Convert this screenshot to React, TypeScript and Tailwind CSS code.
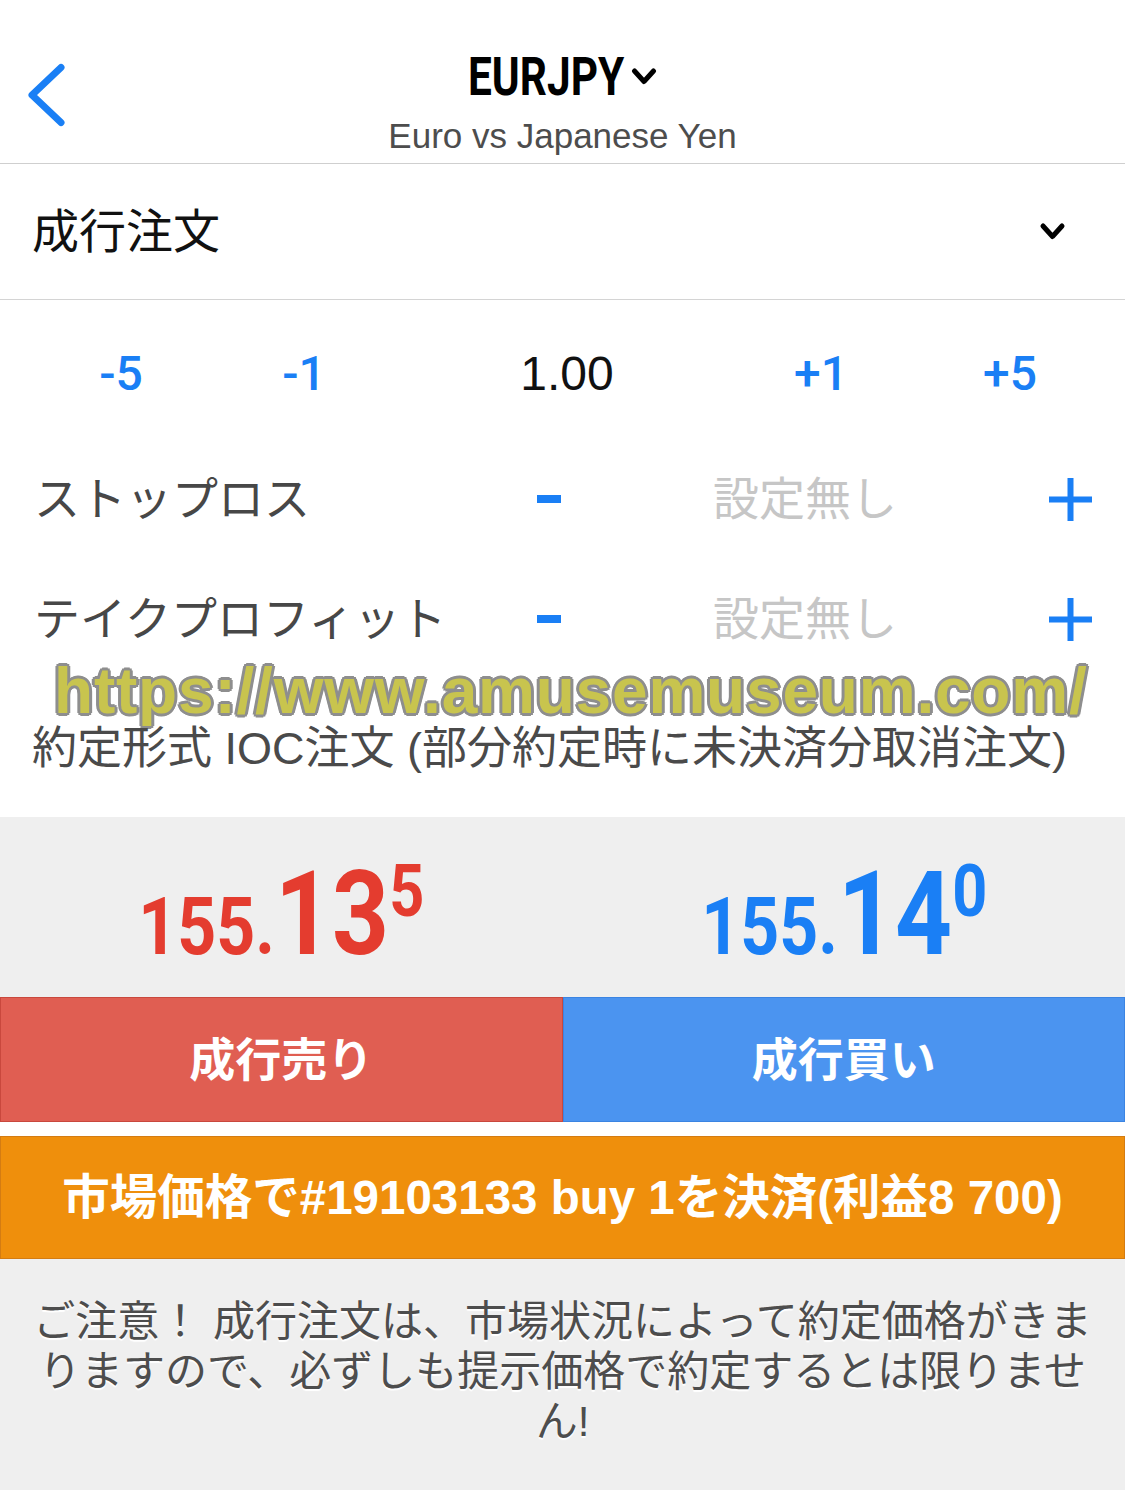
import React from 'react';

// ============================================================
// EURJPY market order screen
// ============================================================

const BLUE = 'text-[#1a7ff5]';

function Chevron({ className = '' }: { className?: string }) {
  return (
    <svg viewBox="0 0 26 20" className={className} fill="none">
      <path d="M3.5 4 L13 14.5 L22.5 4" stroke="currentColor" strokeWidth="5" strokeLinecap="round" strokeLinejoin="round" />
    </svg>
  );
}

function Plus() {
  return (
    <svg viewBox="0 0 43 43" className="w-[43px] h-[43px] text-[#1a7ff5]">
      <rect x="18.5" y="0" width="6" height="43" fill="currentColor" />
      <rect x="0" y="18.5" width="43" height="6" fill="currentColor" />
    </svg>
  );
}

function SlTpRow({ label, className = '' }: { label: string; className?: string }) {
  return (
    <div className={`grid grid-cols-[503px_24px_1fr_43px] items-center pl-[34px] pr-[33px] ${className}`}>
      <span className="text-[46px] leading-none text-[#474747] whitespace-nowrap">{label}</span>
      <span className="block w-[24px] h-[8px] bg-[#1a7ff5]" />
      <span className="text-center text-[46px] leading-none text-[#c6c6c6]">設定無し</span>
      <Plus />
    </div>
  );
}

function Price({ head, big, sup, color }: { head: string; big: string; sup: string; color: string }) {
  return (
    <div className="flex justify-center">
      <span className={`inline-block scale-x-[0.85] font-['Roboto',sans-serif] font-bold leading-none whitespace-nowrap ${color}`}>
        <span className="text-[80px]">{head}</span>
        <span className="text-[117px]">{big}</span>
        <span className="text-[72px] align-top">{sup}</span>
      </span>
    </div>
  );
}

export default function App() {
  return (
    <div className="w-[1125px] min-h-[1491px] bg-white font-['Liberation_Sans','Noto_Sans_CJK_JP',sans-serif]">
      {/* Header */}
      <header className="h-[164px] border-b border-[#cfcfcf] grid grid-cols-[120px_1fr_120px]">
        <div>
          <svg viewBox="0 0 46 72" className="w-[46px] h-[72px] mt-[60px] ml-[24px]" fill="none">
            <path d="M37 7.5 L8 35 L37 62.5" stroke="#1a7ff5" strokeWidth="7" strokeLinecap="round" strokeLinejoin="round" />
          </svg>
        </div>
        <div className="flex flex-col items-center pt-[51px]">
          <div className="flex items-start h-[52px]">
            <span className="block w-[152px] h-[52px]">
              <span className="inline-block origin-left scale-x-[0.8] font-['Roboto',sans-serif] font-bold text-[53px] leading-[52px] text-black whitespace-nowrap">
                EURJPY
              </span>
            </span>
            <Chevron className="w-[26px] h-[20px] ml-[11px] mt-[16px] text-black" />
          </div>
          <div className="mt-[13px] text-[35px] leading-[40px] text-[#4d4d4d] whitespace-nowrap">Euro vs Japanese Yen</div>
        </div>
        <div />
      </header>

      {/* Order type */}
      <div className="h-[136px] border-b border-[#d4d4d4] flex items-center justify-between pl-[32px] pr-[59px]">
        <span className="text-[47px] leading-none text-[#111]">成行注文</span>
        <Chevron className="w-[27px] h-[20px] text-black" />
      </div>

      {/* Volume */}
      <div className="h-[147px] flex items-center pl-[71px] text-[48px] leading-none">
        <span className={`w-[100px] text-center font-['Roboto',sans-serif] font-medium ${BLUE}`}>-5</span>
        <span className={`w-[100px] ml-[83px] text-center font-['Roboto',sans-serif] font-medium ${BLUE}`}>-1</span>
        <span className="w-[100px] ml-[163px] text-center text-[#111]">1.00</span>
        <span className={`w-[100px] ml-[154px] text-center font-['Roboto',sans-serif] font-medium ${BLUE}`}>+1</span>
        <span className={`w-[100px] ml-[89px] text-center font-['Roboto',sans-serif] font-medium ${BLUE}`}>+5</span>
      </div>

      <SlTpRow label="ストップロス" className="h-[104px]" />
      <SlTpRow label="テイクプロフィット" className="h-[84px] mt-[26px]" />

      {/* Watermark */}
      <div className="pl-[54px] h-[60px] text-[64px] leading-[60px] tracking-[0.8px] font-bold text-[#c8c44e] whitespace-nowrap [text-shadow:3px_0_0_#8e8e8e,-3px_0_0_#8e8e8e,0_3px_0_#8e8e8e,0_-3px_0_#8e8e8e,2px_2px_0_#8e8e8e,-2px_-2px_0_#8e8e8e,2px_-2px_0_#8e8e8e,-2px_2px_0_#8e8e8e]">
        https://www.amusemuseum.com/
      </div>

      {/* Fill policy */}
      <div className="pl-[32px] pb-[40px] text-[45px] leading-[56px] text-[#4a4a4a] whitespace-nowrap">
        約定形式 IOC注文 (部分約定時に未決済分取消注文)
      </div>

      {/* Prices */}
      <div className="h-[180px] bg-[#efefef] grid grid-cols-2 items-center pt-[14px]">
        <Price head="155." big="13" sup="5" color="text-[#e43c2f]" />
        <Price head="155." big="14" sup="0" color="text-[#1a7ff5]" />
      </div>

      {/* Buy / Sell */}
      <div className="grid grid-cols-2 h-[125px]">
        <button className="bg-[#e05e52] border border-[#c9483d] text-white font-bold text-[46px] leading-none">成行売り</button>
        <button className="bg-[#4b94f0] border border-[#3b84e2] text-white font-bold text-[46px] leading-none">成行買い</button>
      </div>

      <div className="mt-[14px] h-[123px] bg-[#ef8f0c] border border-[#d47c12] flex items-center justify-center text-white font-bold text-[47.5px] leading-none whitespace-nowrap">
        市場価格で#19103133 buy 1を決済(利益8 700)
      </div>

      {/* Notice */}
      <div className="bg-[#efefef] h-[231px] px-[25px] pt-[38px] text-center text-[42px] leading-[50px] text-[#4d4d4d] [text-shadow:0_2px_1px_#ffffff]">
        ご注意！ 成行注文は、市場状況によって約定価格がきまりますので、必ずしも提示価格で約定するとは限りません!
      </div>
    </div>
  );
}
